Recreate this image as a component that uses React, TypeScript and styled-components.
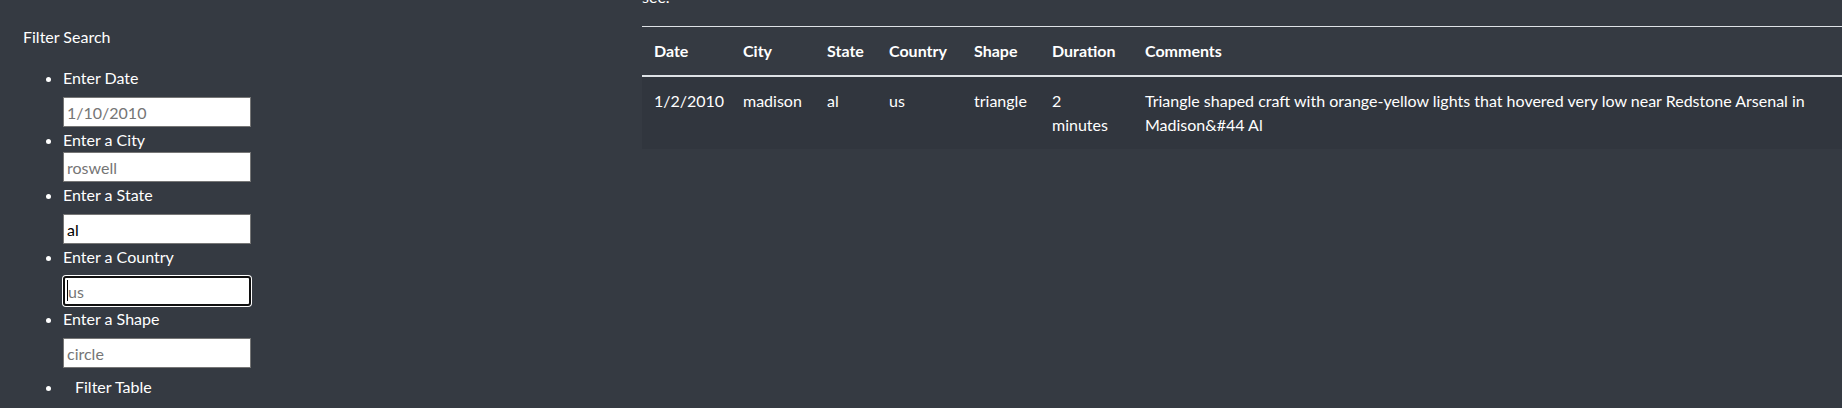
import React from 'react';
import styled, { createGlobalStyle } from 'styled-components';

const GlobalStyle = createGlobalStyle`
	body {
		margin: 0;
		background: #353a42;
		color: #fff;
		font-family: Lato, 'Liberation Sans', sans-serif;
		font-size: 16px;
		line-height: 1.5;
	}
	* {
		box-sizing: border-box;
	}
`;

const Page = styled.div`
	display: grid;
	grid-template-columns: 642px 1fr;
	height: 408px;
	overflow: hidden;
`;

const Sidebar = styled.aside`
	padding: 25px 0 0 23px;
`;

const SidebarTitle = styled.div`
	margin-bottom: 17px;
`;

const FilterList = styled.ul`
	margin: 0;
	padding-left: 40px;
	list-style: disc;
`;

const FilterItem = styled.li`
	margin: 0;
`;

const FieldLabel = styled.label<{ $tight?: boolean }>`
	display: block;
	margin-bottom: ${(p) => (p.$tight ? '0' : '7px')};
`;

const FieldWrap = styled.div<{ $focused?: boolean }>`
	position: relative;
	width: 188px;
	margin-bottom: 1px;
	${(p) =>
		p.$focused &&
		`
		&::after {
			content: '';
			position: absolute;
			left: 4px;
			top: 4px;
			width: 1px;
			height: 21px;
			background: #000;
		}
	`}
`;

const FieldInput = styled.input<{ $focused?: boolean }>`
	display: block;
	width: 188px;
	height: 30px;
	margin: 0;
	padding: 1px 3px;
	font-family: inherit;
	font-size: 16px;
	color: #000;
	background: #fff;
	border: ${(p) => (p.$focused ? '2px solid #101010' : '1px solid #767676')};
	border-radius: ${(p) => (p.$focused ? '3px' : '0')};
	box-shadow: ${(p) => (p.$focused ? '0 0 0 1px #fff' : 'none')};
	outline: none;
	&::placeholder {
		color: #757575;
	}
`;

const FilterButton = styled.button`
	background: transparent;
	border: 0;
	color: #fff;
	font-family: inherit;
	font-size: 16px;
	line-height: 1.5;
	padding: 6px 12px;
	cursor: pointer;
`;

const Main = styled.main`
	min-width: 0;
	overflow: hidden;
`;

const Intro = styled.p`
	margin: -15px 0 17px;
`;

const DataTable = styled.table`
	width: 1240px;
	min-width: 1240px;
	border-collapse: collapse;
	table-layout: fixed;
	color: #fff;
`;

const HeadCell = styled.th`
	text-align: left;
	font-weight: 700;
	padding: 12px;
	vertical-align: bottom;
	border-top: 1px solid #dee2e6;
	border-bottom: 2px solid #dee2e6;
	white-space: nowrap;
`;

const BodyRow = styled.tr`
	&:nth-of-type(odd) {
		background: rgba(0, 0, 0, 0.06);
	}
`;

const BodyCell = styled.td`
	padding: 12px;
	vertical-align: top;
`;

const CommentText = styled.span`
	display: block;
	width: 690px;
`;

const filters = [
	{ id: 'datetime', label: 'Enter Date', placeholder: '1/10/2010' },
	{ id: 'city', label: 'Enter a City', placeholder: 'roswell', tight: true },
	{ id: 'state', label: 'Enter a State', placeholder: '', value: 'al' },
	{ id: 'country', label: 'Enter a Country', placeholder: 'us', focused: true },
	{ id: 'shape', label: 'Enter a Shape', placeholder: 'circle' }
];

const columns = [
	{ name: 'Date', width: 89 },
	{ name: 'City', width: 84 },
	{ name: 'State', width: 62 },
	{ name: 'Country', width: 85 },
	{ name: 'Shape', width: 78 },
	{ name: 'Duration', width: 93 },
	{ name: 'Comments' }
];

const sightings = [
	{
		datetime: '1/2/2010',
		city: 'madison',
		state: 'al',
		country: 'us',
		shape: 'triangle',
		duration: '2 minutes',
		comments:
			'Triangle shaped craft with orange-yellow lights that hovered very low near Redstone Arsenal in Madison&#44 Al'
	}
];

const App: React.FC = () => {
	return (
		<>
			<GlobalStyle />
			<Page>
				<Sidebar>
					<SidebarTitle>Filter Search</SidebarTitle>
					<FilterList>
						{filters.map((f) => (
							<FilterItem key={f.id}>
								<FieldLabel htmlFor={f.id} $tight={f.tight}>
									{f.label}
								</FieldLabel>
								<FieldWrap $focused={f.focused}>
									<FieldInput
										id={f.id}
										type="text"
										placeholder={f.placeholder}
										defaultValue={f.value}
										$focused={f.focused}
									/>
								</FieldWrap>
							</FilterItem>
						))}
						<FilterItem>
							<FilterButton type="button">Filter Table</FilterButton>
						</FilterItem>
					</FilterList>
				</Sidebar>
				<Main>
					<Intro>see.</Intro>
					<DataTable>
						<colgroup>
							{columns.map((c) => (
								<col key={c.name} style={c.width ? { width: c.width } : undefined} />
							))}
						</colgroup>
						<thead>
							<tr>
								{columns.map((c) => (
									<HeadCell key={c.name}>{c.name}</HeadCell>
								))}
							</tr>
						</thead>
						<tbody>
							{sightings.map((s, i) => (
								<BodyRow key={i}>
									<BodyCell>{s.datetime}</BodyCell>
									<BodyCell>{s.city}</BodyCell>
									<BodyCell>{s.state}</BodyCell>
									<BodyCell>{s.country}</BodyCell>
									<BodyCell>{s.shape}</BodyCell>
									<BodyCell>{s.duration}</BodyCell>
									<BodyCell>
										<CommentText>{s.comments}</CommentText>
									</BodyCell>
								</BodyRow>
							))}
						</tbody>
					</DataTable>
				</Main>
			</Page>
		</>
	);
};

export default App;
